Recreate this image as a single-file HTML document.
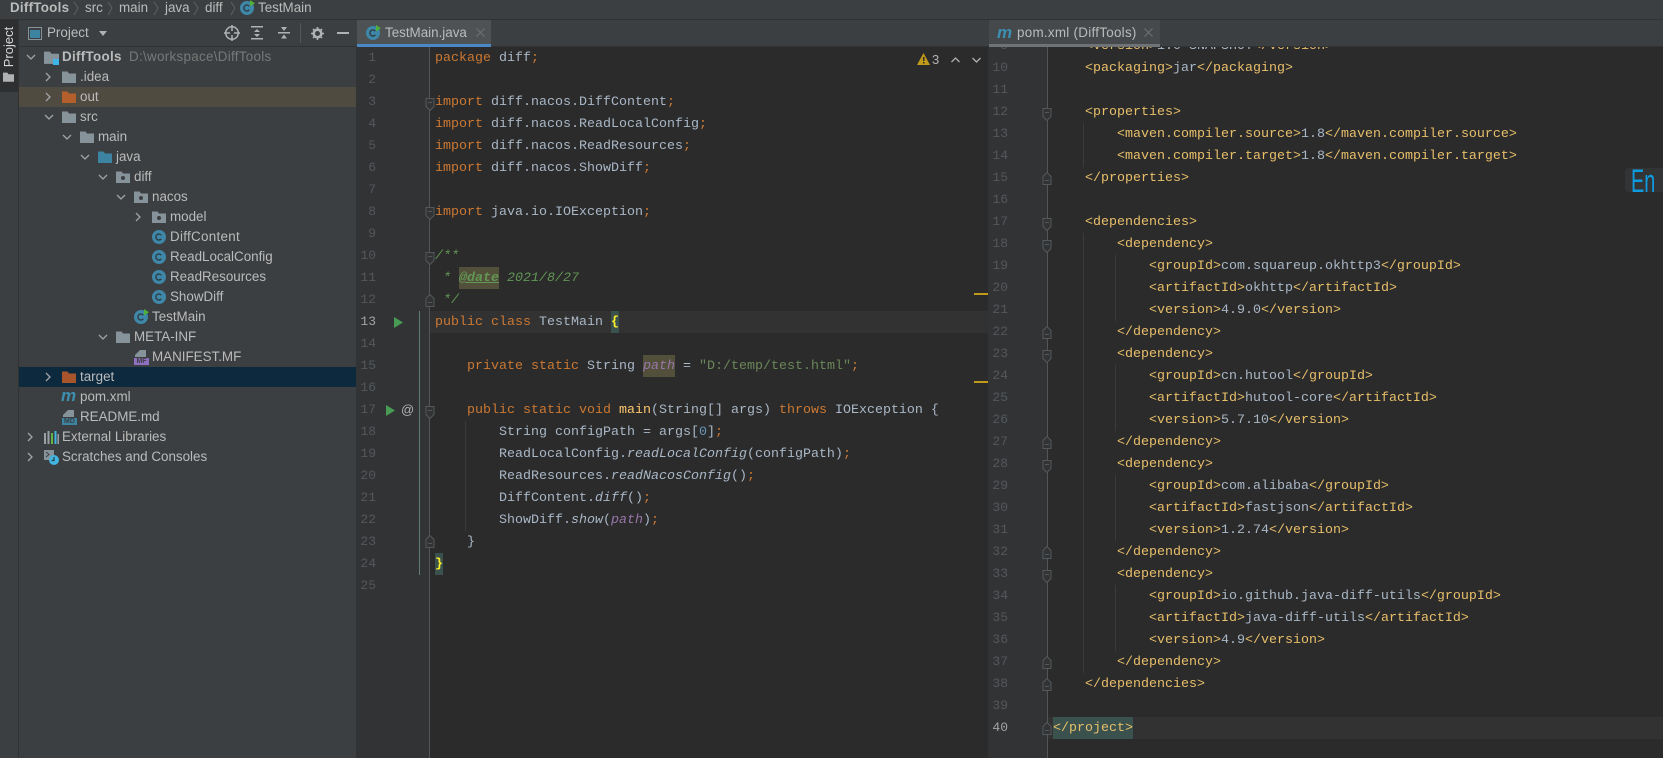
<!DOCTYPE html>
<html><head><meta charset="utf-8">
<style>
html,body{margin:0;padding:0;background:#2b2b2b}
#w{position:relative;width:1663px;height:758px;overflow:hidden;background:#2b2b2b;font-family:"Liberation Sans",sans-serif;font-size:13.4px;color:#bbb}
.b{position:absolute}
.t{position:absolute;white-space:pre;line-height:20px}
svg{position:absolute;overflow:visible}
.code{position:absolute;font-family:"Liberation Mono",monospace;font-size:13.33px;line-height:22px;white-space:pre;color:#a9b7c6}
.num{position:absolute;font-family:"Liberation Mono",monospace;font-size:13px;line-height:22px;text-align:right;color:#55585b;white-space:pre}
.k{color:#cc7832}.c{color:#629755;font-style:italic}.f{color:#9876aa;font-style:italic}.m{color:#ffc66d}.i{font-style:italic}.n{color:#6897bb}.s{color:#6a8759}
.g{color:#e8bf6a}.br{color:#ffef28;font-weight:bold}
.hb{position:absolute;height:22px;background:#52503a}
.hg{position:absolute;height:22px;background:#3b514d}
.mv{position:absolute;font:italic bold 17px "Liberation Sans",sans-serif;color:#3d8fb0;line-height:20px;letter-spacing:-1px}
</style></head><body><div id="w">
<svg width="0" height="0" style="position:absolute"><defs>
<symbol id="ar" viewBox="0 0 8 10"><path d="M2 1l4 4-4 4" fill="none" stroke="#a0a4a6" stroke-width="1.3"/></symbol>
<symbol id="ad" viewBox="0 0 10 8"><path d="M1 2l4 4 4-4" fill="none" stroke="#a0a4a6" stroke-width="1.3"/></symbol>
<symbol id="fo" viewBox="0 0 14 12"><path d="M0 .5h5.5L7 2.5h7V12H0z" fill="#87939a"/></symbol>
<symbol id="fj" viewBox="0 0 14 12"><path d="M0 .5h5.5L7 2.5h7V12H0z" fill="#3d84a3"/></symbol>
<symbol id="fp" viewBox="0 0 14 12"><path d="M0 .5h5.5L7 2.5h7V12H0z" fill="#87939a"/><circle cx="7" cy="7" r="2" fill="#3c3f41"/></symbol>
<symbol id="fx" viewBox="0 0 14 12"><path d="M0 .5h5.5L7 2.5h7V12H0z" fill="#b5602c"/></symbol>
<symbol id="cl" viewBox="0 0 14 14"><circle cx="7" cy="7" r="7" fill="#3e87a8"/><path d="M9.3 5.2A3 3 0 1 0 9.3 8.8" fill="none" stroke="#2f3d44" stroke-width="1.4"/></symbol>
<symbol id="cr" viewBox="0 0 15 15"><circle cx="7" cy="8" r="7" fill="#3e87a8"/><path d="M9.3 6.2A3 3 0 1 0 9.3 9.8" fill="none" stroke="#2f3d44" stroke-width="1.4"/><path d="M10 0l5 3.200-5 3.300z" fill="#4eb13a"/></symbol>
<symbol id="fs" viewBox="0 0 10 14"><path d="M1 .5H9V8.500L5 12.500 1 8.500Z" fill="#313335" stroke="#55585a"/><path d="M3 4.500H7" stroke="#55585a"/></symbol>
<symbol id="fe" viewBox="0 0 10 14"><path d="M5 .5L9 4.500V12.500H1V4.500Z" fill="#313335" stroke="#55585a"/><path d="M3 8.500H7" stroke="#55585a"/></symbol>
<symbol id="ru" viewBox="0 0 9 11"><path d="M0 0l9 5.500-9 5.500z" fill="#499c54"/></symbol>
</defs></svg>

<!-- breadcrumb -->
<div class="b" style="left:0;top:0;width:1663px;height:19px;background:#3c3f41;border-bottom:1px solid #323232;box-sizing:content-box"></div>
<div class="t" style="left:10px;top:-2px;font-weight:bold;letter-spacing:.25px">DiffTools</div>
<div class="t" style="left:85px;top:-2px">src</div>
<div class="t" style="left:119px;top:-2px">main</div>
<div class="t" style="left:165px;top:-2px">java</div>
<div class="t" style="left:205px;top:-2px">diff</div>
<div class="t" style="left:258px;top:-2px">TestMain</div>
<svg style="left:0;top:0" width="240" height="19" fill="none" stroke="#5d6164"><path d="M74 2l4 6-4 7M108 2l4 6-4 7M154 2l4 6-4 7M194 2l4 6-4 7M231 2l4 6-4 7"/></svg>
<svg style="left:240px;top:0" width="15" height="15"><use href="#cr"/></svg>

<!-- left strip -->
<div class="b" style="left:0;top:20px;width:19px;height:738px;background:#3c3f41;border-right:1px solid #323232;box-sizing:border-box"></div>
<div class="b" style="left:0;top:20px;width:18px;height:72px;background:#2d2f30"></div>
<div class="t" style="left:9px;top:47px;transform:translate(-50%,-50%) rotate(-90deg);color:#d8d8d8;font-size:13px">Project</div>
<svg style="left:3px;top:72px" width="11" height="10" viewBox="0 0 14 12"><path d="M0 .5h5.500L7 2.500h7V12H0z" fill="#afb1b3"/></svg>

<!-- project panel -->
<div class="b" style="left:19px;top:20px;width:337px;height:738px;background:#3c3f41"></div>
<div class="b" style="left:19px;top:46px;width:337px;height:1px;background:#323232"></div>
<div class="b" style="left:19px;top:87px;width:337px;height:20px;background:#4f4b41"></div>
<div class="b" style="left:19px;top:367px;width:337px;height:20px;background:#0d293e"></div>
<svg style="left:28px;top:27px" width="14" height="13"><rect x=".5" y=".5" width="13" height="12" fill="none" stroke="#87939a"/><rect x="2" y="3" width="10" height="8" fill="#3d84a3"/></svg>
<div class="t" style="left:47px;top:23px">Project</div>
<svg style="left:99px;top:31px" width="9" height="5"><path d="M0 0h8l-4 5z" fill="#afb1b3"/></svg>
<svg style="left:224px;top:25px" width="16" height="16" fill="none" stroke="#afb1b3" stroke-width="1.500"><circle cx="8" cy="8" r="6.300"/><path d="M8 0v6M8 10v6M0 8h6M10 8h6"/></svg>
<svg style="left:251px;top:26px" width="13" height="14" fill="#afb1b3"><rect y="0" width="12" height="1.500"/><rect y="12" width="12" height="1.500"/><path d="M6 3l3 3H3zM6 11L3 8h6z"/></svg>
<svg style="left:278px;top:26px" width="13" height="14" fill="#afb1b3"><rect y="6" width="12" height="1.500"/><path d="M6 5L3 1h6zM6 8.500l3 4H3z"/></svg>
<div class="b" style="left:300px;top:23px;width:1px;height:20px;background:#515658"></div>
<svg style="left:311px;top:27px" width="13" height="13" viewBox="0 0 13 13"><circle cx="6.500" cy="6.500" r="3.800" fill="none" stroke="#afb1b3" stroke-width="2.600"/><path d="M6.500 0v13M0 6.500h13M2 2l9 9M11 2l-9 9" stroke="#afb1b3" stroke-width="1.600" stroke-dasharray="2 9 2 0"/></svg>
<div class="b" style="left:337px;top:32px;width:12px;height:2px;background:#afb1b3"></div>

<!-- tree -->
<svg style="left:26px;top:53px" width="10" height="8"><use href="#ad"/></svg>
<svg style="left:44px;top:51px" width="15" height="13"><use href="#fo"/></svg><div class="b" style="left:53px;top:59px;width:6px;height:6px;background:#3fb4e8"></div>
<div class="t" style="left:62px;top:47px;font-weight:bold;letter-spacing:.3px">DiffTools</div><div class="t" style="left:129px;top:47px;color:#787878;letter-spacing:.3px">D:\workspace\DiffTools</div>
<svg style="left:44px;top:72px" width="8" height="10"><use href="#ar"/></svg><svg style="left:62px;top:71px" width="14" height="12"><use href="#fo"/></svg><div class="t" style="left:80px;top:67px">.idea</div>
<svg style="left:44px;top:92px" width="8" height="10"><use href="#ar"/></svg><svg style="left:62px;top:91px" width="14" height="12"><use href="#fx"/></svg><div class="t" style="left:80px;top:87px">out</div>
<svg style="left:44px;top:113px" width="10" height="8"><use href="#ad"/></svg><svg style="left:62px;top:111px" width="14" height="12"><use href="#fo"/></svg><div class="t" style="left:80px;top:107px">src</div>
<svg style="left:62px;top:133px" width="10" height="8"><use href="#ad"/></svg><svg style="left:80px;top:131px" width="14" height="12"><use href="#fo"/></svg><div class="t" style="left:98px;top:127px">main</div>
<svg style="left:80px;top:153px" width="10" height="8"><use href="#ad"/></svg><svg style="left:98px;top:151px" width="14" height="12"><use href="#fj"/></svg><div class="t" style="left:116px;top:147px">java</div>
<svg style="left:98px;top:173px" width="10" height="8"><use href="#ad"/></svg><svg style="left:116px;top:171px" width="14" height="12"><use href="#fp"/></svg><div class="t" style="left:134px;top:167px">diff</div>
<svg style="left:116px;top:193px" width="10" height="8"><use href="#ad"/></svg><svg style="left:134px;top:191px" width="14" height="12"><use href="#fp"/></svg><div class="t" style="left:152px;top:187px">nacos</div>
<svg style="left:134px;top:212px" width="8" height="10"><use href="#ar"/></svg><svg style="left:152px;top:211px" width="14" height="12"><use href="#fp"/></svg><div class="t" style="left:170px;top:207px">model</div>
<svg style="left:152px;top:230px" width="14" height="14"><use href="#cl"/></svg><div class="t" style="left:170px;top:227px;letter-spacing:.3px">DiffContent</div>
<svg style="left:152px;top:250px" width="14" height="14"><use href="#cl"/></svg><div class="t" style="left:170px;top:247px">ReadLocalConfig</div>
<svg style="left:152px;top:270px" width="14" height="14"><use href="#cl"/></svg><div class="t" style="left:170px;top:267px">ReadResources</div>
<svg style="left:152px;top:290px" width="14" height="14"><use href="#cl"/></svg><div class="t" style="left:170px;top:287px">ShowDiff</div>
<svg style="left:134px;top:309px" width="15" height="15"><use href="#cr"/></svg><div class="t" style="left:152px;top:307px">TestMain</div>
<svg style="left:98px;top:333px" width="10" height="8"><use href="#ad"/></svg><svg style="left:116px;top:331px" width="14" height="12"><use href="#fo"/></svg><div class="t" style="left:134px;top:327px">META-INF</div>
<svg style="left:134px;top:350px" width="15" height="15"><path d="M6 0h6v7H1V5z" fill="#87939a"/><rect y="8" width="15" height="7" fill="#8f6fc0"/></svg><div class="b" style="left:134px;top:358px;width:15px;text-align:center;font:bold 7px/7px 'Liberation Sans',sans-serif;color:#3c3f41">MF</div><div class="t" style="left:152px;top:347px">MANIFEST.MF</div>
<svg style="left:44px;top:372px" width="8" height="10"><use href="#ar"/></svg><svg style="left:62px;top:371px" width="14" height="12"><path d="M0 .5h5.500L7 2.500h7V12H0z" fill="#a8552c"/></svg><div class="t" style="left:80px;top:367px">target</div>
<div class="mv" style="left:61px;top:386px">m</div><div class="t" style="left:80px;top:387px">pom.xml</div>
<svg style="left:62px;top:410px" width="15" height="15"><path d="M6 0h6v7H1V5z" fill="#87939a"/><rect y="8" width="15" height="7" fill="#3d84a3"/></svg><div class="b" style="left:62px;top:418px;width:15px;text-align:center;font:bold 7px/7px 'Liberation Sans',sans-serif;color:#3c3f41">MD</div><div class="t" style="left:80px;top:407px">README.md</div>
<svg style="left:26px;top:432px" width="8" height="10"><use href="#ar"/></svg>
<svg style="left:44px;top:431px" width="15" height="13"><rect x="0" y="2" width="2" height="11" fill="#9aa1a6"/><rect x="3.500" y="0" width="2" height="13" fill="#9aa1a6"/><rect x="7" y="2" width="2" height="11" fill="#62b543"/><rect x="10.500" y="0" width="2" height="13" fill="#40b6e0"/><rect x="13.500" y="3" width="1.500" height="10" fill="#9aa1a6"/></svg>
<div class="t" style="left:62px;top:427px">External Libraries</div>
<svg style="left:26px;top:452px" width="8" height="10"><use href="#ar"/></svg>
<svg style="left:44px;top:450px" width="15" height="15"><rect width="10" height="10" fill="#87939a"/><path d="M2 2l3 2.500L2 7" fill="none" stroke="#3c3f41"/><circle cx="10" cy="10" r="5" fill="#40b6e0"/><path d="M10 7v3.500h-2.500" fill="none" stroke="#2b3d47" stroke-width="1.200"/></svg>
<div class="t" style="left:62px;top:447px">Scratches and Consoles</div>

<!-- tab bars -->
<div class="b" style="left:356px;top:20px;width:1307px;height:27px;background:#3c3f41;border-bottom:1px solid #323232;box-sizing:border-box"></div>
<div class="b" style="left:357px;top:20px;width:134px;height:27px;background:#4e5254"></div>
<div class="b" style="left:357px;top:44px;width:134px;height:3px;background:#4a88c7"></div>
<svg style="left:366px;top:25px" width="15" height="15"><use href="#cr"/></svg>
<div class="t" style="left:385px;top:23px">TestMain.java</div>
<svg style="left:476px;top:28px" width="9" height="9" stroke="#6e7173" fill="none"><path d="M.5.5l8 8M8.500.5l-8 8"/></svg>
<div class="b" style="left:989px;top:20px;width:171px;height:27px;background:#45494b"></div>
<div class="b" style="left:989px;top:44px;width:171px;height:3px;background:#6f7375"></div>
<div class="mv" style="left:997px;top:23px">m</div>
<div class="t" style="left:1017px;top:23px;letter-spacing:.28px">pom.xml (DiffTools)</div>
<svg style="left:1144px;top:28px" width="9" height="9" stroke="#6e7173" fill="none"><path d="M.5.5l8 8M8.500.5l-8 8"/></svg>

<!-- left editor -->
<div class="b" style="left:356px;top:47px;width:74px;height:711px;background:#313335"></div>
<div class="b" style="left:430px;top:311px;width:558px;height:22px;background:#323232"></div>
<div class="hb" style="left:459px;top:267px;width:40px"></div>
<div class="hg" style="left:611px;top:311px;width:8px"></div>
<div class="hb" style="left:643px;top:355px;width:32px"></div>
<div class="hg" style="left:435px;top:553px;width:8px"></div>
<div class="b" style="left:429px;top:47px;width:1px;height:711px;background:#555"></div>
<div class="b" style="left:419px;top:311px;width:1px;height:264px;background:#5f7d72"></div>
<div class="b" style="left:465px;top:421px;width:1px;height:110px;background:#3b3b3b"></div>
<div class="num" style="left:356px;top:47px;width:20px">1
2
3
4
5
6
7
8
9
10
11
12
<span style="color:#a4a3a3">13</span>
14
15
16
17
18
19
20
21
22
23
24
25</div>
<svg style="left:394px;top:317px" width="9" height="11"><use href="#ru"/></svg>
<svg style="left:386px;top:405px" width="9" height="11"><use href="#ru"/></svg>
<div class="t" style="left:401px;top:400px;font-size:13px;color:#afb1b3">@</div>
<svg style="left:425px;top:98px" width="10" height="14"><use href="#fs"/></svg>
<svg style="left:425px;top:207px" width="10" height="14"><use href="#fs"/></svg>
<svg style="left:425px;top:252px" width="10" height="14"><use href="#fs"/></svg>
<svg style="left:425px;top:294px" width="10" height="14"><use href="#fe"/></svg>
<svg style="left:425px;top:406px" width="10" height="14"><use href="#fs"/></svg>
<svg style="left:425px;top:535px" width="10" height="14"><use href="#fe"/></svg>
<div class="code" style="left:435px;top:48px"><span class="k">package</span> diff<span class="k">;</span>

<span class="k">import</span> diff.nacos.DiffContent<span class="k">;</span>
<span class="k">import</span> diff.nacos.ReadLocalConfig<span class="k">;</span>
<span class="k">import</span> diff.nacos.ReadResources<span class="k">;</span>
<span class="k">import</span> diff.nacos.ShowDiff<span class="k">;</span>

<span class="k">import</span> java.io.IOException<span class="k">;</span>

<span class="c">/**</span>
<span class="c"> * <span style="text-decoration:underline;font-weight:bold">@date</span> 2021/8/27</span>
<span class="c"> */</span>
<span class="k">public class</span> TestMain <span class="br">{</span>

    <span class="k">private static</span> String <span class="f">path</span> = <span class="s">"D:/temp/test.html"</span><span class="k">;</span>

    <span class="k">public static void</span> <span class="m">main</span>(String[] args) <span class="k">throws</span> IOException {
        String configPath = args[<span class="n">0</span>]<span class="k">;</span>
        ReadLocalConfig.<span class="i">readLocalConfig</span>(configPath)<span class="k">;</span>
        ReadResources.<span class="i">readNacosConfig</span>()<span class="k">;</span>
        DiffContent.<span class="i">diff</span>()<span class="k">;</span>
        ShowDiff.<span class="i">show</span>(<span class="f">path</span>)<span class="k">;</span>
    }
<span class="br">}</span>
</div>
<svg style="left:917px;top:53px" width="13" height="12"><path d="M6.500 0L13 12H0z" fill="#c19a1a"/><rect x="6" y="4" width="1.500" height="4" fill="#2b2b2b"/><rect x="6" y="9" width="1.500" height="1.500" fill="#2b2b2b"/></svg>
<div class="t" style="left:932px;top:50px;font-size:13px;color:#afb1b3">3</div>
<svg style="left:951px;top:57px" width="9" height="5" fill="none" stroke="#afb1b3" stroke-width="1.300"><path d="M.5 5L4.500 1 8.500 5"/></svg>
<svg style="left:972px;top:58px" width="9" height="5" fill="none" stroke="#afb1b3" stroke-width="1.300"><path d="M.5 0L4.500 4 8.500 0"/></svg>
<div class="b" style="left:974px;top:293px;width:14px;height:2px;background:#c19a1a"></div>
<div class="b" style="left:974px;top:381px;width:14px;height:2px;background:#c19a1a"></div>

<!-- right editor -->
<div class="b" style="left:988px;top:47px;width:59px;height:711px;background:#313335"></div>
<div class="b" style="left:1048px;top:717px;width:615px;height:22px;background:#323232"></div>
<div class="hg" style="left:1053px;top:717px;width:80px"></div>
<div class="b" style="left:1047px;top:47px;width:1px;height:711px;background:#555"></div>
<div class="b" style="left:1083px;top:123px;width:1px;height:44px;background:#3b3b3b"></div>
<div class="b" style="left:1083px;top:233px;width:1px;height:440px;background:#3b3b3b"></div>
<div class="b" style="left:1115px;top:255px;width:1px;height:66px;background:#3b3b3b"></div>
<div class="b" style="left:1115px;top:365px;width:1px;height:66px;background:#3b3b3b"></div>
<div class="b" style="left:1115px;top:475px;width:1px;height:66px;background:#3b3b3b"></div>
<div class="b" style="left:1115px;top:585px;width:1px;height:66px;background:#3b3b3b"></div>
<svg style="left:1042px;top:108px" width="10" height="14"><use href="#fs"/></svg>
<svg style="left:1042px;top:172px" width="10" height="14"><use href="#fe"/></svg>
<svg style="left:1042px;top:218px" width="10" height="14"><use href="#fs"/></svg>
<svg style="left:1042px;top:240px" width="10" height="14"><use href="#fs"/></svg>
<svg style="left:1042px;top:326px" width="10" height="14"><use href="#fe"/></svg>
<svg style="left:1042px;top:350px" width="10" height="14"><use href="#fs"/></svg>
<svg style="left:1042px;top:436px" width="10" height="14"><use href="#fe"/></svg>
<svg style="left:1042px;top:460px" width="10" height="14"><use href="#fs"/></svg>
<svg style="left:1042px;top:546px" width="10" height="14"><use href="#fe"/></svg>
<svg style="left:1042px;top:570px" width="10" height="14"><use href="#fs"/></svg>
<svg style="left:1042px;top:656px" width="10" height="14"><use href="#fe"/></svg>
<svg style="left:1042px;top:678px" width="10" height="14"><use href="#fe"/></svg>
<svg style="left:1042px;top:722px" width="10" height="14"><use href="#fe"/></svg>
<div class="b" style="left:988px;top:47px;width:675px;height:711px;overflow:hidden">
<div class="num" style="left:0;top:-12px;width:20px">9
10
11
12
13
14
15
16
17
18
19
20
21
22
23
24
25
26
27
28
29
30
31
32
33
34
35
36
37
38
39
<span style="color:#a4a3a3">40</span></div>
<div class="code" style="left:65px;top:-11px">    <span class="g">&lt;version&gt;</span>1.0-SNAPSHOT<span class="g">&lt;/version&gt;</span>
    <span class="g">&lt;packaging&gt;</span>jar<span class="g">&lt;/packaging&gt;</span>

    <span class="g">&lt;properties&gt;</span>
        <span class="g">&lt;maven.compiler.source&gt;</span>1.8<span class="g">&lt;/maven.compiler.source&gt;</span>
        <span class="g">&lt;maven.compiler.target&gt;</span>1.8<span class="g">&lt;/maven.compiler.target&gt;</span>
    <span class="g">&lt;/properties&gt;</span>

    <span class="g">&lt;dependencies&gt;</span>
        <span class="g">&lt;dependency&gt;</span>
            <span class="g">&lt;groupId&gt;</span>com.squareup.okhttp3<span class="g">&lt;/groupId&gt;</span>
            <span class="g">&lt;artifactId&gt;</span>okhttp<span class="g">&lt;/artifactId&gt;</span>
            <span class="g">&lt;version&gt;</span>4.9.0<span class="g">&lt;/version&gt;</span>
        <span class="g">&lt;/dependency&gt;</span>
        <span class="g">&lt;dependency&gt;</span>
            <span class="g">&lt;groupId&gt;</span>cn.hutool<span class="g">&lt;/groupId&gt;</span>
            <span class="g">&lt;artifactId&gt;</span>hutool-core<span class="g">&lt;/artifactId&gt;</span>
            <span class="g">&lt;version&gt;</span>5.7.10<span class="g">&lt;/version&gt;</span>
        <span class="g">&lt;/dependency&gt;</span>
        <span class="g">&lt;dependency&gt;</span>
            <span class="g">&lt;groupId&gt;</span>com.alibaba<span class="g">&lt;/groupId&gt;</span>
            <span class="g">&lt;artifactId&gt;</span>fastjson<span class="g">&lt;/artifactId&gt;</span>
            <span class="g">&lt;version&gt;</span>1.2.74<span class="g">&lt;/version&gt;</span>
        <span class="g">&lt;/dependency&gt;</span>
        <span class="g">&lt;dependency&gt;</span>
            <span class="g">&lt;groupId&gt;</span>io.github.java-diff-utils<span class="g">&lt;/groupId&gt;</span>
            <span class="g">&lt;artifactId&gt;</span>java-diff-utils<span class="g">&lt;/artifactId&gt;</span>
            <span class="g">&lt;version&gt;</span>4.9<span class="g">&lt;/version&gt;</span>
        <span class="g">&lt;/dependency&gt;</span>
    <span class="g">&lt;/dependencies&gt;</span>

<span class="g">&lt;/project&gt;</span></div>
</div>

<!-- IME indicator -->
<div class="b" style="left:1625px;top:168px;width:38px;height:24px;background:#333435;border-radius:4px 0 0 4px"></div>
<div class="t" style="left:1631px;top:170px;font-size:32px;line-height:22px;color:#0f9be0;transform:scaleX(.62);transform-origin:left top">En</div>
</div></body></html>
